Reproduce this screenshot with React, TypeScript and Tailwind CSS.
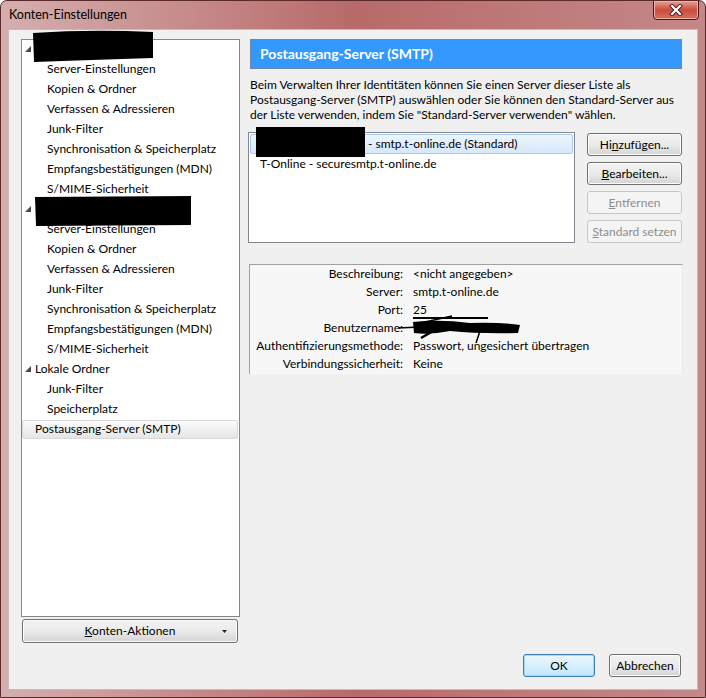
import React from "react";

const F = { fontFamily: "Lato, 'Noto Sans', sans-serif" };

function Tri() {
  return (
    <svg width="6" height="6" viewBox="0 0 6 6" className="shrink-0">
      <path d="M6 0 L6 6 L0 6 Z" fill="#4a4a4a" />
    </svg>
  );
}

function TreeRow({
  label,
  level,
  expand,
  selected,
}: {
  label: string;
  level: number;
  expand?: boolean;
  selected?: boolean;
}) {
  return (
    <div className="h-[20px] flex items-center pr-[1px]">
      <div
        className={
          "h-[19px] w-full flex items-center rounded-[2px] border " +
          (selected
            ? "border-[#d9d9d9] bg-gradient-to-b from-[#fafafa] to-[#e6e6e6]"
            : "border-transparent")
        }
      >
        {level === 0 ? (
          <>
            <div className="w-[12px] pl-[2px] flex items-center">{expand ? <Tri /> : null}</div>
            <span>{label}</span>
          </>
        ) : (
          <span className="pl-[24px]">{label}</span>
        )}
      </div>
    </div>
  );
}

function Btn({
  children,
  disabled,
  def,
  className = "",
}: {
  children: React.ReactNode;
  disabled?: boolean;
  def?: boolean;
  className?: string;
}) {
  const base =
    "h-[23px] flex items-center justify-center rounded-[3px] border text-[12px] leading-none ";
  const look = disabled
    ? "border-[#c5c8cb] bg-[#f4f4f4] text-[#8d8d8d]"
    : def
    ? "border-[#3c7fb1] bg-gradient-to-b from-[#eaf6fd] via-[#d9f0fc] to-[#bee6fd] text-black shadow-[inset_0_0_0_1px_#a7d9f5]"
    : "border-[#707070] bg-gradient-to-b from-[#f2f2f2] via-[#ebebeb] to-[#d4d4d4] text-black shadow-[inset_0_0_0_1px_#fcfcfc]";
  return <div className={base + look + " " + className}>{children}</div>;
}

export default function App() {
  const tree1 = [
    "Server-Einstellungen",
    "Kopien & Ordner",
    "Verfassen & Adressieren",
    "Junk-Filter",
    "Synchronisation & Speicherplatz",
    "Empfangsbestätigungen (MDN)",
    "S/MIME-Sicherheit",
  ];
  const details: [string, string][] = [
    ["Beschreibung:", "<nicht angegeben>"],
    ["Server:", "smtp.t-online.de"],
    ["Port:", "25"],
    ["Benutzername:", ""],
    ["Authentifizierungsmethode:", "Passwort, ungesichert übertragen"],
    ["Verbindungssicherheit:", "Keine"],
  ];
  return (
    <div
      style={F}
      className="relative w-[706px] h-[698px] flex flex-col rounded-t-[7px] border border-[#5c2a2a] bg-gradient-to-r from-[#d4afaf] via-[#b86a6a] to-[#c48888] text-[12px] text-black overflow-hidden"
    >
      {/* title bar */}
      <div className="h-[28px] shrink-0 flex items-start pl-[8px] pt-[6px] leading-[15px] text-[12.5px] text-black">
        Konten-Einstellungen
      </div>
      {/* close button */}
      <div className="absolute top-[-1px] right-[6px] w-[46px] h-[20px] rounded-b-[4px] border border-[#4a1414] bg-gradient-to-b from-[#e5a193] via-[#c94c3c] to-[#d5705f] flex items-center justify-center shadow-[inset_0_0_0_1px_#eeb3a8]">
        <svg width="14" height="12" viewBox="0 0 14 12">
          <path d="M3 2 L11 10 M11 2 L3 10" stroke="#4a1a1a" strokeWidth="4" strokeLinecap="square" />
          <path d="M3 2 L11 10 M11 2 L3 10" stroke="#ffffff" strokeWidth="2.2" strokeLinecap="square" />
        </svg>
      </div>

      {/* content */}
      <div className="mx-[7px] mb-[7px] flex-1 flex flex-col border border-[#cdb7b7] bg-[#f0f0f0] pl-[12px] pt-[9px] pr-[14px] pb-[12px]">
        <div className="flex gap-[8px] h-[604px]">
          {/* left column */}
          <div className="w-[219px] flex flex-col">
            <div className="h-[578px] border border-[#828790] bg-white flex flex-col">
              <div className="-mt-[1px] flex flex-col">
                <TreeRow label="" level={0} expand />
                {tree1.map((t) => (
                  <TreeRow key={"a" + t} label={t} level={1} />
                ))}
                <TreeRow label="" level={0} expand />
                {tree1.map((t) => (
                  <TreeRow key={"b" + t} label={t} level={1} />
                ))}
                <TreeRow label="Lokale Ordner" level={0} expand />
                <TreeRow label="Junk-Filter" level={1} />
                <TreeRow label="Speicherplatz" level={1} />
                <TreeRow label="Postausgang-Server (SMTP)" level={0} selected />
              </div>
            </div>
            <Btn className="mt-[2px] ml-[1px] w-[216px] h-[24px] relative">
              <span>
                <u>K</u>onten-Aktionen
              </span>
              <svg className="absolute right-[10px] top-[10px]" width="5" height="3" viewBox="0 0 5 3">
                <path d="M0 0 L5 0 L2.5 3 Z" fill="#222" />
              </svg>
            </Btn>
          </div>

          {/* right column */}
          <div className="w-[435px] flex flex-col">
            <div className="ml-[2px] w-[432px] h-[30px] bg-[#3399ff] border border-[#6f88a3] flex items-center pl-[9px]">
              <span className="text-white font-bold text-[14px] leading-none">Postausgang-Server (SMTP)</span>
            </div>
            <div className="ml-[2px] mt-[8px] leading-[15px]">
              Beim Verwalten Ihrer Identitäten können Sie einen Server dieser Liste als
              <br />
              Postausgang-Server (SMTP) auswählen oder Sie können den Standard-Server aus
              <br />
              der Liste verwenden, indem Sie "Standard-Server verwenden" wählen.
            </div>
            <div className="mt-[10px] flex gap-[12px]">
              <div className="w-[327px] h-[111px] border border-[#828790] bg-white p-[1px] flex flex-col">
                <div className="h-[20px] rounded-[2px] border border-[#a6c9ee] bg-gradient-to-b from-[#eef5fd] to-[#d6e8fb] flex items-center pl-[117px] leading-none">
                  - smtp.t-online.de (Standard)
                </div>
                <div className="h-[20px] flex items-center pl-[10px] leading-none">
                  T-Online - securesmtp.t-online.de
                </div>
              </div>
              <div className="w-[95px] flex flex-col gap-[6px] pt-[1px]">
                <Btn>
                  <span>
                    Hi<u>n</u>zufügen...
                  </span>
                </Btn>
                <Btn>
                  <span>
                    <u>B</u>earbeiten...
                  </span>
                </Btn>
                <Btn disabled>
                  <span>
                    <u>E</u>ntfernen
                  </span>
                </Btn>
                <Btn disabled>
                  <span>
                    <u>S</u>tandard setzen
                  </span>
                </Btn>
              </div>
            </div>
            <div className="mt-[21px] ml-[1px] h-[110px] w-[434px] border-t border-l border-[#a0a0a0] border-r border-r-[#e8e8e8] bg-[#f7f7f7] flex flex-col">
              {details.map(([k, v]) => (
                <div key={k} className="h-[18px] flex items-center leading-[18px]">
                  <div className="w-[153px] text-right whitespace-nowrap">{k}</div>
                  <div className="pl-[10px] whitespace-nowrap">{v}</div>
                </div>
              ))}
            </div>
          </div>
        </div>

        {/* bottom buttons */}
        <div className="mt-[11px] flex justify-end gap-[14px] pr-[2px]">
          <Btn def className="w-[72px]">
            OK
          </Btn>
          <Btn className="w-[72px]">Abbrechen</Btn>
        </div>
      </div>

      {/* redactions */}
      <svg className="absolute left-[-1px] top-[-1px] pointer-events-none" width="706" height="698" viewBox="0 0 706 698">
        <path d="M33 33 Q90 29 153 32 L153 58 Q90 60 34 62 Z" fill="#000" />
        <path d="M35 197 L191 196 L191 225 L36 226 Z" fill="#000" />
        <path d="M256 127 L365 127 L365 157 L256 157 Z" fill="#000" />
        <path d="M413 318 L488 318" stroke="#000" strokeWidth="2" />
        <path d="M398 328 L420 327" stroke="#000" strokeWidth="1.5" />
        <path d="M413 322 Q440 319 470 323 Q500 322 520 325 L518 333 Q480 334 450 331 Q430 335 414 333 Z" fill="#000" />
        <path d="M440 327 L421 338" stroke="#000" strokeWidth="2.5" />
        <path d="M480 331 L476 343" stroke="#000" strokeWidth="1.5" />
        <path d="M425 322 L452 316" stroke="#000" strokeWidth="1.5" />
      </svg>
    </div>
  );
}
